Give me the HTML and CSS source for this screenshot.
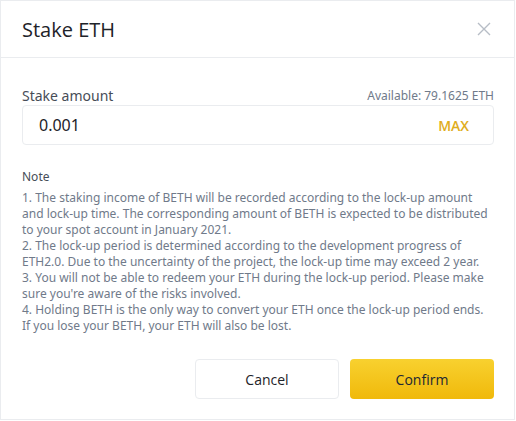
FILE: index.html
```html
<!DOCTYPE html>
<html>
<head>
<meta charset="utf-8">
<link rel="stylesheet" href="styles.css">
</head>
<body>
<div class="dialog">
  <div class="header">
    <div class="title">Stake ETH</div>
    <svg class="close" width="14" height="14" viewBox="0 0 14 14"><path d="M1 1L13 13M13 1L1 13" stroke="#b7bdc6" stroke-width="1.4" fill="none"/></svg>
  </div>
  <div class="body">
    <div class="label-row">
      <span class="label">Stake amount</span>
      <span class="avail">Available: 79.1625 ETH</span>
    </div>
    <div class="input">
      <span class="value">0.001</span>
      <span class="max">MAX</span>
    </div>
    <div class="note">
      <div class="note-title">Note</div>
      <p>1. The staking income of BETH will be recorded according to the lock-up amount and lock-up time. The corresponding amount of BETH is expected to be distributed to your spot account in January 2021.<br>2. The lock-up period is determined according to the development progress of ETH2.0. Due to the uncertainty of the project, the lock-up time may exceed 2 year.<br>3. You will not be able to redeem your ETH during the lock-up period. Please make sure you're aware of the risks involved.<br>4. Holding BETH is the only way to convert your ETH once the lock-up period ends. If you lose your BETH, your ETH will also be lost.</p>
    </div>
    <div class="actions">
      <button class="btn cancel">Cancel</button>
      <button class="btn confirm">Confirm</button>
    </div>
  </div>
</div>
</body>
</html>
```
FILE: styles.css
```css
html, body { margin: 0; padding: 0; background: #fff; }
body { font-family: "Noto Sans", "Open Sans", sans-serif; }
.dialog {
  width: 515px;
  height: 420px;
  box-sizing: border-box;
  border: 1px solid #eaecef;
  display: flex;
  flex-direction: column;
}
.header {
  height: 56px;
  border-bottom: 1px solid #eaecef;
  display: flex;
  align-items: center;
  justify-content: space-between;
  padding: 0 23px 0 21px;
}
.title { font-family: "Open Sans", "Noto Sans", sans-serif; font-size: 20px; color: #1e2329; font-weight: 500; }
.close { display: block; }
.body { padding: 27px 20px 0 21px; display: flex; flex-direction: column; }
.label-row {
  display: flex;
  justify-content: space-between;
  align-items: center;
  height: 20px;
}
.label { font-size: 14px; color: #474d57; }
.avail { font-size: 12px; color: #707a8a; }
.input {
  height: 40px;
  box-sizing: border-box;
  border: 1px solid #eaecef;
  border-radius: 4px;
  display: flex;
  align-items: center;
  justify-content: space-between;
  padding: 0 24px 0 16px;
}
.value { font-size: 16px; color: #1e2329; }
.max { font-family: "Open Sans", "Noto Sans", sans-serif; font-size: 14px; font-weight: 600; color: #e0ad1c; }
.note { margin-top: 24px; font-size: 12px; line-height: 16px; }
.note-title { color: #474d57; margin-bottom: 5px; }
.note p { margin: 0; color: #707a8a; }
.actions { display: flex; justify-content: flex-end; gap: 11px; margin-top: 25px; }
.btn {
  width: 144px;
  height: 40px;
  border-radius: 4px;
  font-family: "Open Sans", "Noto Sans", sans-serif;
  font-size: 14px;
  font-weight: 500;
  cursor: pointer;
}
.cancel { background: #fff; border: 1px solid #eaecef; color: #1e2329; }
.confirm { background: linear-gradient(180deg, #f8d12f 0%, #f0b90b 100%); border: none; color: #212833; }
```
